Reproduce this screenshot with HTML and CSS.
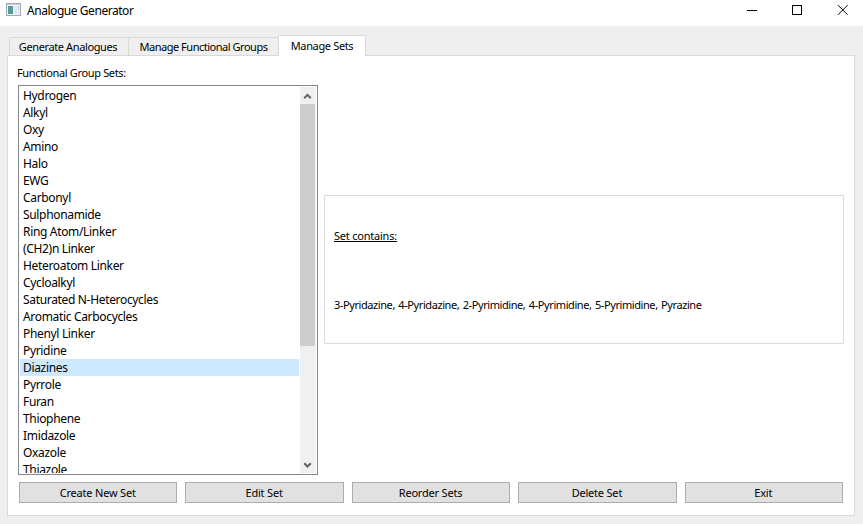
FILE: index.html
```html
<!DOCTYPE html>
<html lang="en">
<head>
<meta charset="utf-8">
<title>Analogue Generator</title>
<link rel="stylesheet" href="styles.css">
</head>
<body>
<header class="titlebar">
  <svg class="app-icon" width="15" height="13" viewBox="0 0 15 13">
    <defs><linearGradient id="g" x1="0" y1="0" x2="1" y2="1"><stop offset="0" stop-color="#5a93b5"/><stop offset="1" stop-color="#47a877"/></linearGradient></defs>
    <rect x=".5" y=".5" width="14" height="12" fill="#f4f5f6" stroke="#a3a8ac"/>
    <rect x="1" y="1" width="13" height="1" fill="#c9d0d5"/>
    <rect x="2" y="3" width="5" height="8" fill="url(#g)"/>
    <rect x="8" y="3" width="3" height="8" fill="#dde7ed"/>
    <rect x="12" y="3" width="1" height="4" fill="#bdc9cf"/>
    <rect x="12" y="8" width="1" height="3" fill="#d5dce0"/>
  </svg>
  <h1 class="title">Analogue Generator</h1>
  <svg class="controls" width="103" height="12" viewBox="0 0 103 12" fill="none" stroke="#000" stroke-width="1">
    <path d="M0 5.500h10"/>
    <rect x="45.500" y=".5" width="9" height="9"/>
    <path d="M91 .2l9.600 9.600M100.600 .2L91 9.800"/>
  </svg>
</header>
<main class="window">
  <nav class="tabs">
    <div class="tab tab-generate">Generate Analogues</div>
    <div class="tab tab-groups">Manage Functional Groups</div>
    <div class="tab tab-sets active">Manage Sets</div>
  </nav>
  <section class="panel">
    <div class="label">Functional Group Sets:</div>
    <div class="content">
      <div class="listbox">
        <ul class="items">
          <li>Hydrogen</li><li>Alkyl</li><li>Oxy</li><li>Amino</li><li>Halo</li><li>EWG</li>
          <li>Carbonyl</li><li>Sulphonamide</li><li>Ring Atom/Linker</li><li>(CH2)n Linker</li>
          <li>Heteroatom Linker</li><li>Cycloalkyl</li><li>Saturated N-Heterocycles</li>
          <li>Aromatic Carbocycles</li><li>Phenyl Linker</li><li>Pyridine</li>
          <li class="selected">Diazines</li><li>Pyrrole</li><li>Furan</li><li>Thiophene</li>
          <li>Imidazole</li><li>Oxazole</li><li>Thiazole</li>
        </ul>
        <div class="scrollbar">
          <svg class="arrow" width="16" height="17" viewBox="0 0 16 17" fill="none" stroke="#606060" stroke-width="2"><path d="M4.200 11.200L7.500 7.900l3.300 3.300"/></svg>
          <div class="thumb"></div>
          <svg class="arrow" width="16" height="17" viewBox="0 0 16 17" fill="none" stroke="#606060" stroke-width="2"><path d="M4.200 7.200L7.500 10.500l3.300-3.300"/></svg>
        </div>
      </div>
      <div class="details">
        <p class="details-title"><u>Set contains:</u></p>
        <p class="details-text">3-Pyridazine, 4-Pyridazine, 2-Pyrimidine, 4-Pyrimidine, 5-Pyrimidine, Pyrazine</p>
      </div>
    </div>
    <div class="actions">
      <button>Create New Set</button>
      <button>Edit Set</button>
      <button>Reorder Sets</button>
      <button>Delete Set</button>
      <button>Exit</button>
    </div>
  </section>
</main>
</body>
</html>
```
FILE: styles.css
```css
* { box-sizing: border-box; margin: 0; padding: 0; }
body {
  width: 863px; height: 524px; overflow: hidden;
  background: #efefef; color: #000;
  font: 11px/14px "Noto Sans", "Open Sans", sans-serif;
  white-space: nowrap;
}
.titlebar { display: flex; height: 26px; background: #fff; padding: 3px 13px 0 6px; align-items: flex-start; }
.title { font-size: 12px; font-weight: 400; line-height: 16px; margin-left: 6px; flex: 1; letter-spacing: -0.45px; }
.controls { margin-top: 2px; }
.window { padding: 9px 8px 8px 7px; }
.tabs { display: flex; height: 21px; align-items: flex-end; padding-left: 2px; margin-bottom: -1px; position: relative; }
.tab { height: 19px; border: 1px solid #d9d9d9; border-right: 0; padding-top: 2px; text-align: center; }
.tab-generate { width: 119px; padding-right: 2px; letter-spacing: -0.38px; }
.tab-groups { width: 150px; letter-spacing: -0.48px; }
.tab-sets { width: 88px; letter-spacing: -0.35px; }
.tab.active { height: 21px; background: #fff; border-right: 1px solid #d9d9d9; border-bottom: 0; padding-top: 3px; }
.panel { height: 461px; background: #fff; border: 1px solid #d9d9d9; padding: 10px 10px 0; }
.label { height: 19px; letter-spacing: -0.35px; margin-left: -1px; }
.content { display: flex; gap: 6px; align-items: center; height: 390px; }
.listbox { display: flex; width: 300px; height: 390px; border: 1px solid #828790; padding: 1px; }
.items { flex: 1; list-style: none; overflow: hidden; margin-right: 1px; font-size: 12px; line-height: 17px; letter-spacing: -0.33px; }
.items li { height: 17px; padding-left: 3px; }
.items .selected { background: #cde8ff; }
.scrollbar { width: 16px; background: #f0f0f0; display: flex; flex-direction: column; }
.scrollbar .thumb { width: 15px; height: 242px; background: #cdcdcd; }
.arrow { display: block; flex: none; }
.arrow:last-child { margin-top: auto; }
.details { width: 520px; height: 149px; border: 1px solid #dcdcdc; padding: 33px 9px 0; margin-top: -21px; }
.details-title { margin-bottom: 55px; letter-spacing: -0.22px; }
.details-text { letter-spacing: -0.42px; word-spacing: 1px; }
.actions { display: grid; grid-template-columns: repeat(5, 1fr); gap: 8px; margin: 7px 1px 0; }
.actions button { height: 21px; background: #e1e1e1; border: 1px solid #adadad; font: inherit; color: inherit; letter-spacing: -0.2px; padding-right: 1px; }
```
